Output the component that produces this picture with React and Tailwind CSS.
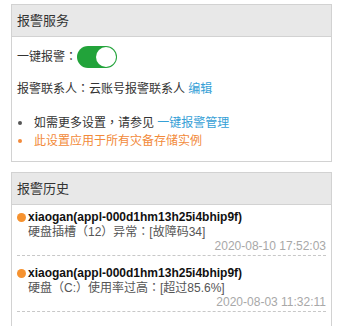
const font = { fontFamily: '"Liberation Sans", "Noto Sans CJK TC", sans-serif' };

const alerts = [
  {
    name: "xiaogan(appl-000d1hm13h25i4bhip9f)",
    msg: "硬盘插槽（12）异常：[故障码34]",
    time: "2020-08-10 17:52:03",
  },
  {
    name: "xiaogan(appl-000d1hm13h25i4bhip9f)",
    msg: "硬盘（C:）使用率过高：[超过85.6%]",
    time: "2020-08-03 11:32:11",
  },
];

function Panel({ title, children, className = "" }) {
  return (
    <div className={`ml-[11px] w-[321px] border border-[#d2d2d2] bg-white ${className}`}>
      <div className="h-[32px] flex items-center pl-[5px] bg-[#e8e8e8] border-b border-[#d2d2d2] text-[13px] text-[#333]">
        {title}
      </div>
      {children}
    </div>
  );
}

export default function App() {
  return (
    <div className="w-[348px] h-[326px] overflow-hidden bg-white pt-[4px] text-[#333]" style={font}>
      <Panel title="报警服务">
        <div className="px-[5px] pb-[11px] text-[12px]">
          <div className="mt-[9px] h-[22px] flex items-center">
            <span>一键报警：</span>
            <div className="w-[40px] h-[22px] rounded-full bg-[#22a33a] flex items-center justify-end pr-[1px]">
              <div className="w-[20px] h-[20px] rounded-full bg-white" />
            </div>
          </div>
          <div className="mt-[12px] leading-[18px]">
            报警联系人：云账号报警联系人 <span className="text-[#35a0d6]">编辑</span>
          </div>
          <ul className="mt-[16px]">
            <li className="flex items-center leading-[18px] pl-[1px]">
              <span className="w-[4px] h-[4px] rounded-full bg-[#555]" />
              <span className="ml-[12px]">
                如需更多设置，请参见 <span className="text-[#35a0d6]">一键报警管理</span>
              </span>
            </li>
            <li className="flex items-center leading-[18px] pl-[1px] text-[#f28a3a]">
              <span className="w-[4px] h-[4px] rounded-full bg-[#f28a3a]" />
              <span className="ml-[12px]">此设置应用于所有灾备存储实例</span>
            </li>
          </ul>
        </div>
      </Panel>

      <Panel title="报警历史" className="mt-[10px] h-[200px]">
        {alerts.map((a, i) => (
          <div
            key={i}
            className={`mx-[5px] pb-[3px] border-b border-dashed border-[#c8c8c8] ${i === 0 ? "pt-[4px]" : "pt-[9px]"}`}
          >
            <div className="flex items-center h-[16px]">
              <span className="w-[9px] h-[9px] rounded-full bg-[#f6922f] mr-[2px]" />
              <span className="text-[12px] font-bold text-[#111]">{a.name}</span>
            </div>
            <div className="pl-[11px] text-[12px] leading-[15px] text-[#555]">{a.msg}</div>
            <div className="text-right text-[12px] leading-[12px] text-[#a8a8a8]">{a.time}</div>
          </div>
        ))}
      </Panel>
    </div>
  );
}
